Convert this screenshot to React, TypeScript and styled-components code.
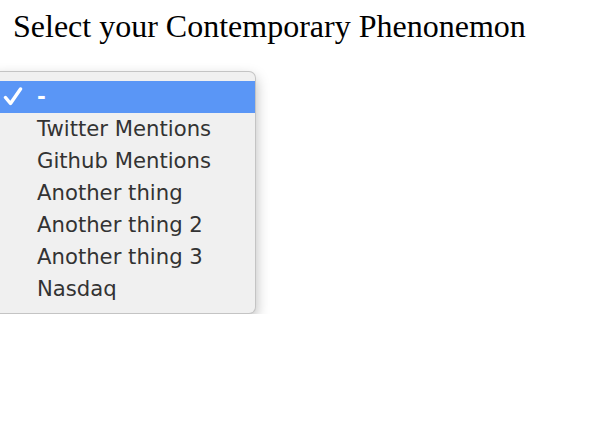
import React from "react";
import styled, { createGlobalStyle } from "styled-components";

const GlobalStyle = createGlobalStyle`
  body {
    margin: 0;
    background: #ffffff;
    overflow: hidden;
  }
`;

const Page = styled.div`
  padding: 8px 0 0 13px;
`;

const Heading = styled.h1`
  margin: 0;
  height: 36px;
  font-family: "Liberation Serif", "Times New Roman", serif;
  font-size: 32px;
  font-weight: normal;
  line-height: 36px;
  color: #000;
`;

const Menu = styled.ul`
  list-style: none;
  margin: 27px 0 0 -19px;
  padding: 9px 0 8px;
  width: 262px;
  box-sizing: border-box;
  background: #f0f0f0;
  border: 1px solid #c4c4c4;
  border-left: none;
  border-radius: 0 7px 7px 0;
  box-shadow: 0 6px 14px rgba(0, 0, 0, 0.28);
  font-family: "DejaVu Sans", sans-serif;
  font-size: 21.2px;
`;

const Row = styled.li<{ $active?: boolean }>`
  display: grid;
  grid-template-columns: 43px 1fr;
  align-items: center;
  height: 32px;
  line-height: 32px;
  color: ${(p) => (p.$active ? "#ffffff" : "#333333")};
  background: ${(p) => (p.$active ? "#5a96f6" : "transparent")};
`;

const Label = styled.span<{ $dash?: boolean }>`
  font-weight: ${(p) => (p.$dash ? "bold" : "normal")};
`;

const CheckCell = styled.span`
  display: flex;
  align-items: center;
  padding-left: 9px;
`;

const options = [
  "-",
  "Twitter Mentions",
  "Github Mentions",
  "Another thing",
  "Another thing 2",
  "Another thing 3",
  "Nasdaq",
];

function Check() {
  return (
    <svg width="20" height="20" viewBox="0 0 20 20">
      <path
        d="M2.5 10.5 L7.5 16.5 L17.5 2"
        fill="none"
        stroke="#ffffff"
        strokeWidth="3.4"
        strokeLinecap="round"
        strokeLinejoin="round"
      />
    </svg>
  );
}

function App() {
  const selected = "-";
  return (
    <>
      <GlobalStyle />
      <Page>
        <Heading>Select your Contemporary Phenonemon</Heading>
        <Menu>
          {options.map((opt) => (
            <Row key={opt} $active={opt === selected}>
              <CheckCell>{opt === selected && <Check />}</CheckCell>
              <Label $dash={opt === "-"}>{opt}</Label>
            </Row>
          ))}
        </Menu>
      </Page>
    </>
  );
}

export default App;
